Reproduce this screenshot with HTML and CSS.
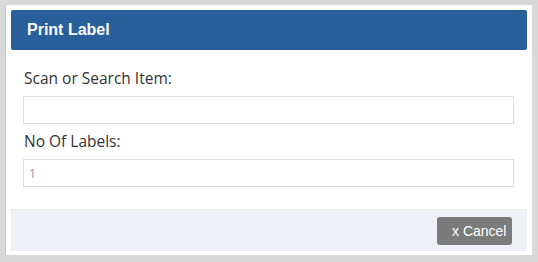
FILE: index.html
```html
<!DOCTYPE html>
<html lang="en">
<head>
	<meta charset="UTF-8">
	<title>Print Label</title>
	<link rel="stylesheet" href="styles.css">
</head>
<body>
	<div class="dialog">
		<div class="dialogHead">Print Label</div>
		<div class="dialogBody">
			<label class="fieldLabel" for="scanItem">Scan or Search Item:</label>
			<input class="fieldInput" id="scanItem" type="text">
			<label class="fieldLabel second" for="labelCount">No Of Labels:</label>
			<input class="fieldInput small" id="labelCount" type="text" value="1">
		</div>
		<div class="dialogFoot">
			<button class="cancelBtn">x Cancel</button>
		</div>
	</div>
</body>
</html>
```

FILE: styles.css
```css
*{
	margin:0;
	padding:0;
	box-sizing: border-box;
}
body{
	background: #d9d9d9;
	padding: 5px 6px 7px 5px;
	font-family: "Open Sans", "Liberation Sans", sans-serif;
}
.dialog{
	width: 527px;
	height: 250px;
	background: #fff;
	border-left: 1px solid #c8c8c8;
	padding: 5px 5px 4px 5px;
	display: flex;
	flex-direction: column;
}
.dialogHead{
	height: 40px;
	background: #285e9a;
	border-radius: 2px;
	color: #fff;
	font-family: "Liberation Sans", Arial, sans-serif;
	font-weight: bold;
	font-size: 16px;
	line-height: 40px;
	padding-left: 16px;
}
.dialogBody{
	padding: 18px 13px 0 12px;
	display: flex;
	flex-direction: column;
}
.fieldLabel{
	font-size: 15.5px;
	line-height: 20px;
	color: #333;
	margin-bottom: 8px;
	padding-left: 1px;
}
.fieldLabel.second{
	margin-top: 7px;
}
.fieldInput{
	height: 28px;
	border: 1px solid #dedede;
	outline: none;
	padding: 0 5px;
	font-family: "Open Sans", sans-serif;
	font-size: 12px;
	color: #999;
}
.dialogFoot{
	margin-top: 22px;
	height: 42px;
	background: #eef1f5;
	border-top: 1px solid #e6e9ed;
	display: flex;
	justify-content: flex-end;
	align-items: flex-start;
	padding: 7px 15px 0 0;
}
.cancelBtn{
	width: 75px;
	height: 28px;
	border: none;
	border-radius: 3px;
	background: #7b7b7b;
	color: #fff;
	font-family: "Liberation Sans", Arial, sans-serif;
	font-size: 14px;
	text-align: left;
	padding-left: 15px;
}
```
